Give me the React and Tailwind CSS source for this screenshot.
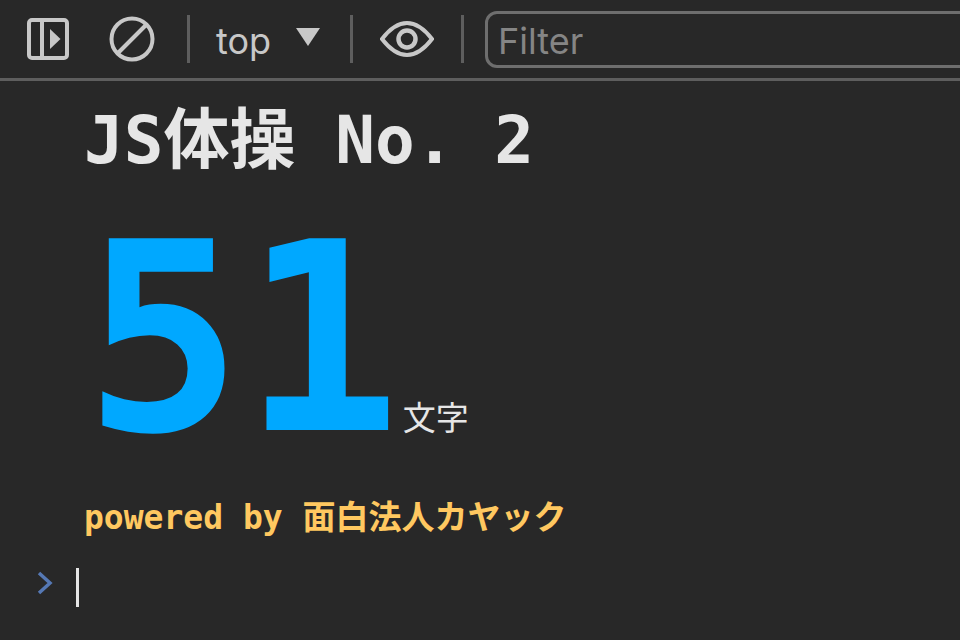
const mono = '"DejaVu Sans Mono", "Noto Sans CJK JP", monospace'

function Divider() {
  return <div className="w-[3px] h-12 bg-[#5e5e5e] shrink-0" />
}

export default function App() {
  return (
    <div className="w-[960px] h-[640px] overflow-hidden bg-[#282828] font-['Inter','Liberation_Sans',sans-serif]">
      {/* toolbar */}
      <div className="h-[81px] border-b-[3px] border-[#5e5e5e] flex items-center pl-[27px]">
        <svg width="42" height="42" viewBox="0 0 42 42" className="shrink-0">
          <rect x="2" y="2" width="38" height="38" rx="3" fill="none" stroke="#c8c8c8" strokeWidth="4" />
          <rect x="13" y="2" width="4" height="38" fill="#c8c8c8" />
          <path d="M23 11 L33.500 21 L23 31 Z" fill="#c8c8c8" />
        </svg>
        <svg width="46" height="46" viewBox="0 0 46 46" className="shrink-0 ml-[40px]">
          <circle cx="23" cy="23" r="20.500" fill="none" stroke="#c8c8c8" strokeWidth="4" />
          <path d="M9 37 L37 9" stroke="#c8c8c8" strokeWidth="4" />
        </svg>
        <div className="ml-[32px]"><Divider /></div>
        <span className="ml-[26px] w-[54px] text-[36px] leading-none text-[#c8c8c8] mt-[3px]">top</span>
        <svg width="24" height="18" viewBox="0 0 24 18" className="shrink-0 ml-[26px] mb-[5px]">
          <path d="M0 0 H24 L12 18 Z" fill="#c8c8c8" />
        </svg>
        <div className="ml-[30px]"><Divider /></div>
        <svg width="54" height="36" viewBox="0 0 54 36" className="shrink-0 ml-[27px]">
          <path d="M2 18 C12 5 20 2 27 2 C34 2 42 5 52 18 C42 31 34 34 27 34 C20 34 12 31 2 18 Z" fill="none" stroke="#c8c8c8" strokeWidth="4" />
          <circle cx="27" cy="18" r="8.500" fill="none" stroke="#c8c8c8" strokeWidth="4.500" />
        </svg>
        <div className="ml-[27px]"><Divider /></div>
        <div className="ml-[21px] w-[600px] h-[57px] shrink-0 border-[3px] border-[#6e6e6e] rounded-[12px] flex items-center pl-[10px]">
          <span className="text-[36px] leading-none text-[#858585] mt-[3px]">Filter</span>
        </div>
      </div>

      {/* console output */}
      <div className="pl-[84px]" style={{ fontFamily: mono }}>
        <div className="mt-[20px] text-[66px] leading-[80px] font-bold text-[#e6e6e6] whitespace-pre">JS体操 No. 2</div>
        <div className="mt-[14px] flex items-baseline h-[288px]">
          <span className="text-[263px] leading-[288px] font-bold text-[#00a8ff]">51</span>
          <span className="ml-[2px] text-[33px] text-[#e6e6e6] font-['Noto_Sans_CJK_JP',sans-serif]">文字</span>
        </div>
        <div className="mt-[15px] text-[33px] leading-[40px] font-bold text-[#ffc860] whitespace-pre">powered by 面白法人カヤック</div>
      </div>

      {/* prompt */}
      <div className="mt-[30px] pl-[37px] flex items-center">
        <svg width="16" height="24" viewBox="0 0 16 24" className="shrink-0 mb-[9px]">
          <path d="M2 2 L13 12 L2 22" fill="none" stroke="#5578b4" strokeWidth="3.500" />
        </svg>
        <div className="ml-[23px] w-[3px] h-[39px] bg-[#e6e6e6]" />
      </div>
    </div>
  )
}
